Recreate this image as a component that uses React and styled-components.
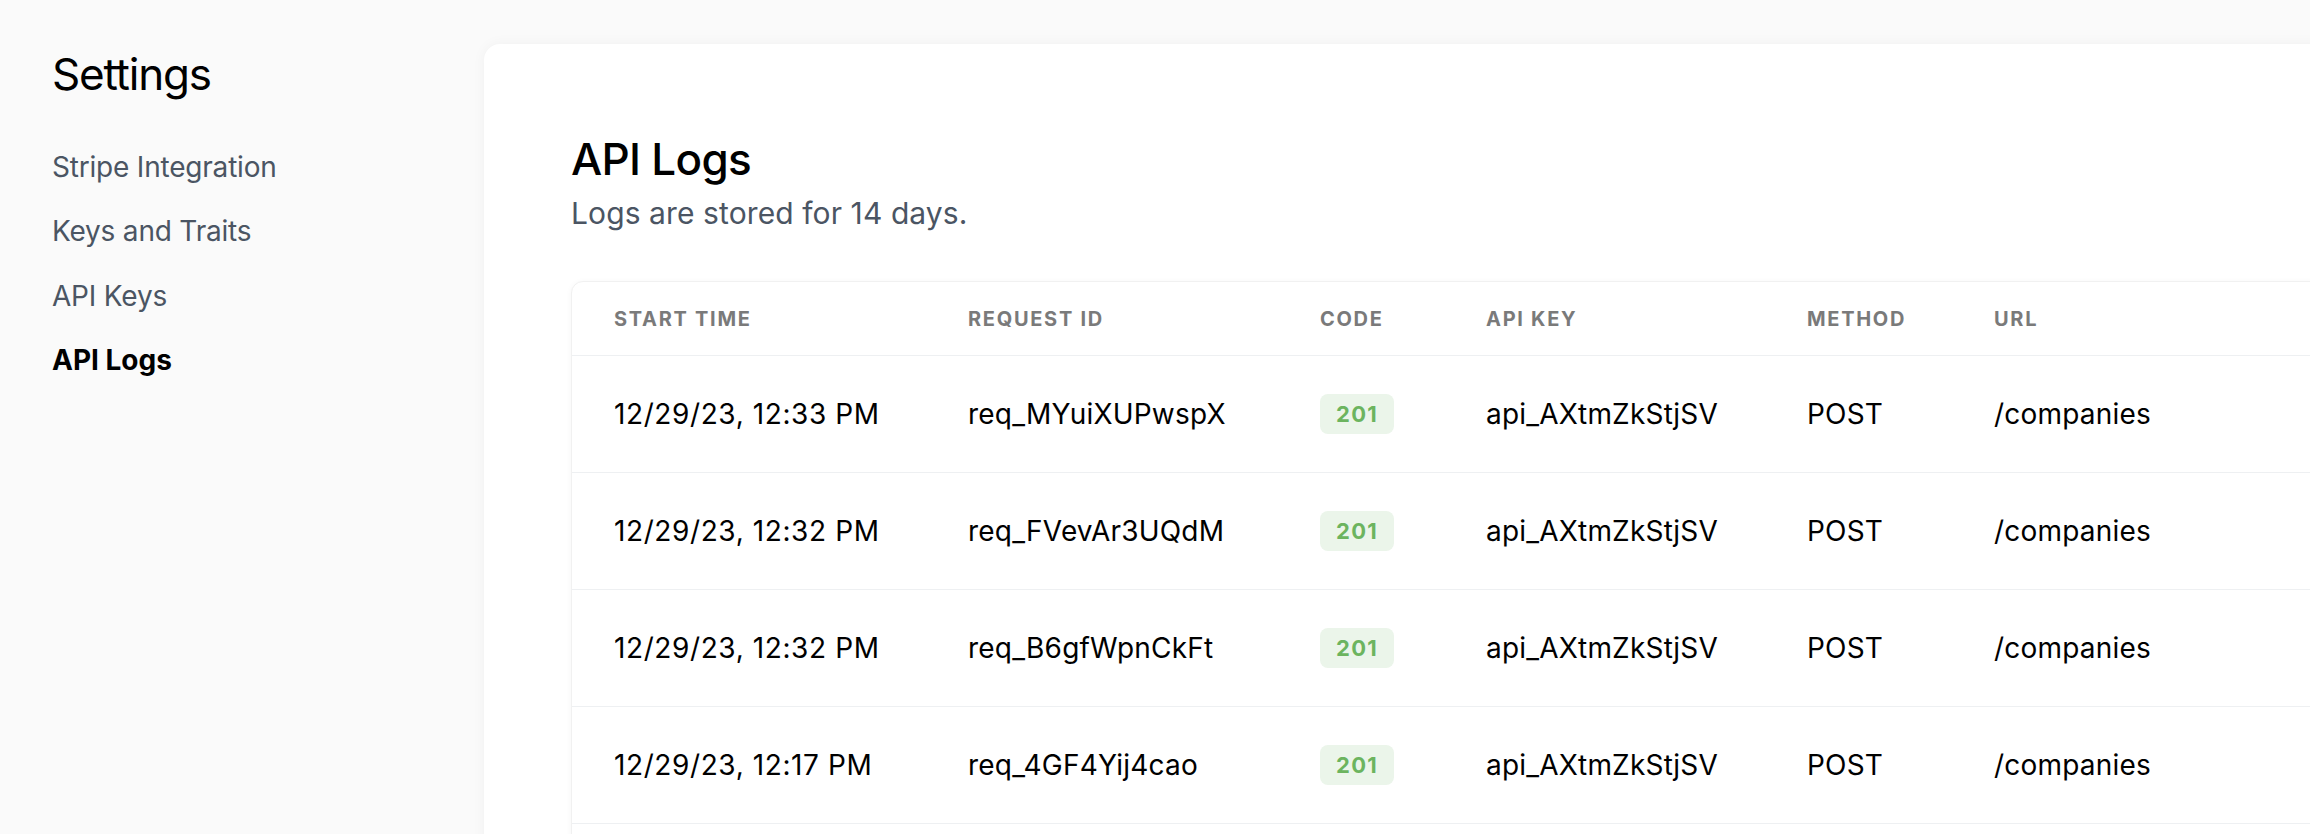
import React from 'react'
import styled, { createGlobalStyle } from 'styled-components'

const GlobalStyle = createGlobalStyle`
  html, body {
    margin: 0;
    padding: 0;
    background: #fafafa;
    overflow: hidden;
  }
  body {
    font-family: Inter, "Noto Sans", sans-serif;
    color: #000;
  }
`;

const logs = [
  { time: '12/29/23, 12:33 PM', id: 'req_MYuiXUPwspX' },
  { time: '12/29/23, 12:32 PM', id: 'req_FVevAr3UQdM' },
  { time: '12/29/23, 12:32 PM', id: 'req_B6gfWpnCkFt' },
  { time: '12/29/23, 12:17 PM', id: 'req_4GF4Yij4cao' },
];

const navItems = ['Stripe Integration', 'Keys and Traits', 'API Keys', 'API Logs'];

export default function App() {
  return (
    <>
      <GlobalStyle />
      <Page>
        <Sidebar>
          <SideTitle>Settings</SideTitle>
          <Nav>
            {navItems.map(item => (
              <NavItem key={item} active={item === 'API Logs'}>{item}</NavItem>
            ))}
          </Nav>
        </Sidebar>
        <Main>
          <Heading>API Logs</Heading>
          <Sub>Logs are stored for 14 days.</Sub>
          <TableCard>
            <HeadRow>
              <HeadCell>Start Time</HeadCell>
              <HeadCell>Request ID</HeadCell>
              <HeadCell>Code</HeadCell>
              <HeadCell>API Key</HeadCell>
              <HeadCell>Method</HeadCell>
              <HeadCell>URL</HeadCell>
            </HeadRow>
            {logs.map(log => (
              <Row key={log.id}>
                <Cell wide>{log.time}</Cell>
                <Cell>{log.id}</Cell>
                <Cell><Badge>201</Badge></Cell>
                <Cell>api_AXtmZkStjSV</Cell>
                <Cell>POST</Cell>
                <Cell>/companies</Cell>
              </Row>
            ))}
          </TableCard>
        </Main>
      </Page>
    </>
  )
}

const Page = styled.div`
  display: flex;
  align-items: flex-start;
  min-height: 834px;
  width: 2310px;
  overflow: hidden;
`;

const Sidebar = styled.aside`
  flex: 0 0 484px;
  box-sizing: border-box;
  padding: 52px 0 0 52px;
`;

const SideTitle = styled.h1`
  margin: 0;
  font-size: 44px;
  line-height: 44px;
  font-weight: 400;
  letter-spacing: -1.2px;
`;

const Nav = styled.nav`
  display: flex;
  flex-direction: column;
  gap: 24.3px;
  margin-top: 51px;
`;

const NavItem = styled.a`
  font-size: 28px;
  line-height: 40px;
  color: ${p => (p.active ? '#000' : '#4b5563')};
  font-weight: ${p => (p.active ? 700 : 400)};
  letter-spacing: ${p => (p.active ? '0' : '-0.2px')};
  cursor: pointer;
`;

const Main = styled.main`
  flex: 0 0 2000px;
  margin-top: 44px;
  min-height: 900px;
  box-sizing: border-box;
  padding: 93px 0 0 87px;
  background: #fff;
  border-radius: 16px;
  box-shadow: 0 0 14px rgba(0, 0, 0, 0.045);
`;

const Heading = styled.h2`
  margin: 0;
  font-size: 44px;
  line-height: 44px;
  font-weight: 500;
  letter-spacing: -0.7px;
`;

const Sub = styled.p`
  margin: 12px 0 0;
  font-size: 30px;
  line-height: 40px;
  color: #4b5563;
  letter-spacing: 0.1px;
`;

const TableCard = styled.div`
  margin-top: 48px;
  padding-bottom: 120px;
  background: #fff;
  border: 1px solid #f1f1f1;
  border-radius: 12px;
  box-shadow: 0 1px 6px rgba(0, 0, 0, 0.04);
`;

const columns = '354px 352px 166px 321px 187px 1fr';

const HeadRow = styled.div`
  display: grid;
  grid-template-columns: ${columns};
  align-items: center;
  height: 73px;
  padding-left: 42px;
  border-bottom: 1px solid #eef0f2;
`;

const HeadCell = styled.div`
  font-size: 20px;
  font-weight: 700;
  text-transform: uppercase;
  letter-spacing: 1.7px;
  color: #7a7a7a;
`;

const Row = styled.div`
  display: grid;
  grid-template-columns: ${columns};
  align-items: center;
  height: 116px;
  padding-left: 42px;
  border-bottom: 1px solid #eef0f2;
`;

const Cell = styled.div`
  font-size: 28px;
  color: #000;
  white-space: nowrap;
  letter-spacing: ${p => (p.wide ? '0.6px' : '0.2px')};
`;

const Badge = styled.span`
  display: inline-flex;
  align-items: center;
  justify-content: center;
  width: 74px;
  height: 40px;
  border-radius: 8px;
  background: #ebf5ea;
  color: #6cb45f;
  font-size: 22px;
  font-weight: 700;
  letter-spacing: 1.2px;
`;
